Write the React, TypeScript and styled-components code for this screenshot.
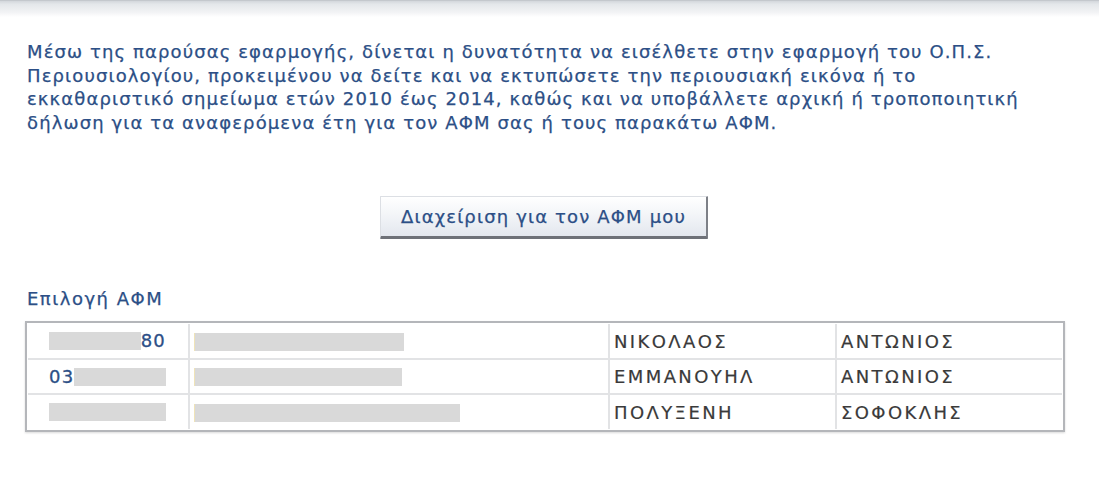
import styled, { createGlobalStyle } from "styled-components";

const GlobalStyle = createGlobalStyle`
  html, body {
    margin: 0;
    padding: 0;
    background: #ffffff;
  }
  body {
    font-family: "DejaVu Sans", Verdana, sans-serif;
  }
`;

interface Person {
  afm: string;
  afmAlign: "left" | "right";
  afmBar: number;
  nameBar: number;
  firstName: string;
  fatherName: string;
}

const people: Person[] = [
  { afm: "80", afmAlign: "right", afmBar: 92, nameBar: 209, firstName: "ΝΙΚΟΛΑΟΣ", fatherName: "ΑΝΤΩΝΙΟΣ" },
  { afm: "03", afmAlign: "left", afmBar: 92, nameBar: 207, firstName: "ΕΜΜΑΝΟΥΗΛ", fatherName: "ΑΝΤΩΝΙΟΣ" },
  { afm: "", afmAlign: "left", afmBar: 117, nameBar: 265, firstName: "ΠΟΛΥΞΕΝΗ", fatherName: "ΣΟΦΟΚΛΗΣ" },
];

const App = () => {
  return (
    <>
      <GlobalStyle />
      <Page>
        <TopBar />
        <Content>
          <Intro>
            Μέσω της παρούσας εφαρμογής, δίνεται η δυνατότητα να εισέλθετε στην εφαρμογή του Ο.Π.Σ.
            <br />
            Περιουσιολογίου, προκειμένου να δείτε και να εκτυπώσετε την περιουσιακή εικόνα ή το
            <br />
            εκκαθαριστικό σημείωμα ετών 2010 έως 2014, καθώς και να υποβάλλετε αρχική ή τροποποιητική
            <br />
            δήλωση για τα αναφερόμενα έτη για τον ΑΦΜ σας ή τους παρακάτω ΑΦΜ.
          </Intro>
          <ButtonRow>
            <ManageButton type="button">Διαχείριση για τον ΑΦΜ μου</ManageButton>
          </ButtonRow>
          <Label>Επιλογή ΑΦΜ</Label>
          <TableFrame>
            <AfmTable>
              <colgroup>
                <col style={{ width: 161 }} />
                <col style={{ width: 420 }} />
                <col style={{ width: 227 }} />
                <col />
              </colgroup>
              <tbody>
                {people.map((p, i) => (
                  <Row key={i}>
                    <AfmCell>
                      <AfmInner $align={p.afmAlign}>
                        {p.afmAlign === "left" && p.afm && <AfmText>{p.afm}</AfmText>}
                        <Redacted style={{ width: p.afmBar }} />
                        {p.afmAlign === "right" && p.afm && <AfmText>{p.afm}</AfmText>}
                      </AfmInner>
                    </AfmCell>
                    <NameCell>
                      <Redacted $marked style={{ width: p.nameBar }} />
                    </NameCell>
                    <TextCell>{p.firstName}</TextCell>
                    <TextCell>{p.fatherName}</TextCell>
                  </Row>
                ))}
              </tbody>
            </AfmTable>
          </TableFrame>
        </Content>
      </Page>
    </>
  );
};

const Page = styled.div`
  width: 1099px;
  min-height: 489px;
  background: #ffffff;
`;

const TopBar = styled.div`
  height: 16px;
  border-top: 1px solid #c4c8cd;
  background: linear-gradient(to bottom, #d3d7dc 0%, #e4e7ea 20%, #f2f3f5 70%, #ffffff 100%);
`;

const Content = styled.div`
  width: 1040px;
  margin-left: 25px;
  padding-top: 23px;
  display: flex;
  flex-direction: column;
`;

const Intro = styled.p`
  margin: 0;
  padding-left: 2px;
  font-size: 18px;
  letter-spacing: 1.12px;
  line-height: 23.5px;
  color: #2c4f86;
  white-space: nowrap;
  -webkit-text-stroke: 0.25px #2c4f86;
`;

const ButtonRow = styled.div`
  display: flex;
  justify-content: center;
  margin-top: 62px;
`;

const ManageButton = styled.button`
  width: 328px;
  height: 43px;
  margin-right: 2px;
  font-family: "DejaVu Sans", Verdana, sans-serif;
  font-size: 18px;
  letter-spacing: 1.15px;
  color: #2c4f86;
  -webkit-text-stroke: 0.25px #2c4f86;
  background: linear-gradient(to bottom, #ffffff 0%, #f3f5f8 45%, #e3e7ee 100%);
  border-top: 1px solid #dcdfe4;
  border-left: 1px solid #dcdfe4;
  border-right: 2px solid #7d8087;
  border-bottom: 3px solid #6e7178;
  border-radius: 1px;
  padding: 0;
  cursor: pointer;
`;

const Label = styled.div`
  margin-top: 50px;
  padding-left: 2px;
  font-size: 18px;
  letter-spacing: 1.5px;
  line-height: 20px;
  color: #2c4f86;
  -webkit-text-stroke: 0.25px #2c4f86;
`;

const TableFrame = styled.div`
  margin-top: 12px;
  border: 2px solid #b4b6ba;
  box-shadow: 0 1px 2px rgba(0, 0, 0, 0.15);
  padding: 1px;
`;

const AfmTable = styled.table`
  width: 100%;
  border-collapse: collapse;
  table-layout: fixed;
`;

const Row = styled.tr`
  height: 35px;

  & + & td {
    border-top: 2px solid #e2e3e5;
  }
`;

const Cell = styled.td`
  padding: 0;
  vertical-align: middle;
  & + & {
    border-left: 2px solid #e2e3e5;
  }
`;

const AfmCell = styled(Cell)``;

const AfmInner = styled.div<{ $align: "left" | "right" }>`
  display: flex;
  align-items: center;
  justify-content: ${(p) => (p.$align === "right" ? "flex-end" : "flex-start")};
  padding: 0 22px 0 21px;
`;

const AfmText = styled.span`
  font-size: 18px;
  letter-spacing: 1.2px;
  color: #2c4f86;
  line-height: 20px;
  -webkit-text-stroke: 0.3px #2c4f86;
`;

const NameCell = styled(Cell)`
  padding-left: 4px;
`;

const Redacted = styled.span<{ $marked?: boolean }>`
  display: inline-block;
  height: 18px;
  background: #d9d9d9;
  vertical-align: middle;
  border-left: ${(p) => (p.$marked ? "1px solid #efe3b8" : "none")};
`;

const TextCell = styled(Cell)`
  padding-left: 4px;
  font-size: 18px;
  letter-spacing: 2.4px;
  color: #3a3a3a;
  white-space: nowrap;
  -webkit-text-stroke: 0.2px #3a3a3a;
`;

export default App;
